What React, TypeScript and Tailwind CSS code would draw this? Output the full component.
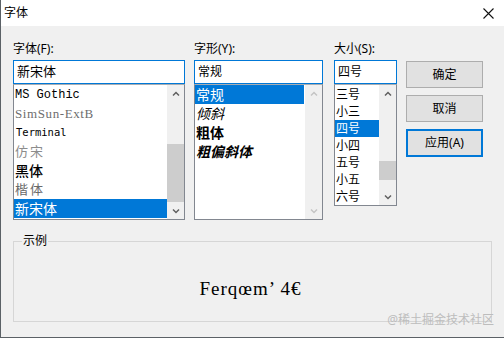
import React from "react";

const Chevron = ({ up, color }: { up?: boolean; color: string }) => (
    <svg width="8" height="6" viewBox="0 0 8 6">
        <polyline
            points={up ? "1,4.5 4,1.5 7,4.5" : "1,1.5 4,4.5 7,1.5"}
            fill="none"
            stroke={color}
            strokeWidth="1.5"
        />
    </svg>
);

const ScrollBar = ({ thumbTop, thumbH, disabled }: { thumbTop?: string; thumbH?: string; disabled?: boolean }) => {
    const c = disabled ? "#c4c4c4" : "#606060";
    return (
        <div className="w-[17px] flex flex-col bg-[#f0f0f0]">
            <div className="h-[17px] flex items-center justify-center">
                <Chevron up color={c} />
            </div>
            <div className="flex-1 flex flex-col">
                {!disabled && <div className={`bg-[#cdcdcd] ${thumbTop} ${thumbH}`} />}
            </div>
            <div className="h-[17px] flex items-center justify-center">
                <Chevron color={c} />
            </div>
        </div>
    );
};

const Label = ({ text }: { text: string }) => (
    <div className="h-[16px] leading-[16px] text-[12px] mb-[3px] text-black">{text}</div>
);

const Input = ({ text, size }: { text: string; size: string }) => (
    <div className={`h-[24px] border border-[#0078d7] bg-white pl-[3px] flex items-center ${size}`}>{text}</div>
);

const App = () => {
    return (
        <div className="relative flex flex-col w-[504px] h-[338px] overflow-hidden bg-[#f0f0f0] border-l border-b border-[#5b6166] font-['Noto_Sans','Noto_Sans_CJK_SC',sans-serif] text-black">
            {/* title bar */}
            <div className="h-[26px] bg-white flex items-center justify-between pl-[3px] pr-[10px]">
                <span className="text-[12px] leading-[16px]">字体</span>
                <svg width="11" height="11" viewBox="0 0 11 11">
                    <path d="M0.5 0.5 L10.5 10.5 M10.5 0.5 L0.5 10.5" stroke="#111" strokeWidth="1.1" />
                </svg>
            </div>

            <div className="flex pl-[12px] pt-[15px]">
                {/* font */}
                <div className="w-[172px] flex flex-col">
                    <Label text="字体(F):" />
                    <Input text="新宋体" size="text-[13px]" />
                    <div className="h-[136px] border border-[#828790] border-t-[#a8adb3] bg-white flex">
                        <div className="flex-1 flex flex-col text-[14px]">
                            <div className="h-[19px] pl-[1px] flex items-center font-['Liberation_Mono',monospace] text-[12px]">MS Gothic</div>
                            <div className="h-[19px] pl-[1px] flex items-center font-['Liberation_Serif',serif] text-[13px] tracking-[0.6px] text-[#6e6e6e]">SimSun-ExtB</div>
                            <div className="h-[19px] pl-[2px] flex items-center font-['DejaVu_Sans_Mono',monospace] text-[10.5px]">Terminal</div>
                            <div className="h-[19px] pl-[1px] flex items-center text-[13px] text-[#8c8c8c] tracking-[2px]">仿宋</div>
                            <div className="h-[19px] pl-[1px] flex items-center font-medium">黑体</div>
                            <div className="h-[19px] pl-[1px] flex items-center text-[13px] text-[#6a6a6a] tracking-[2px]">楷体</div>
                            <div className="h-[19px] pl-[1px] flex items-center bg-[#0078d7] text-white">新宋体</div>
                        </div>
                        <ScrollBar thumbTop="mt-[42px]" thumbH="h-[58px]" />
                    </div>
                </div>

                {/* style */}
                <div className="w-[129px] ml-[9px] flex flex-col">
                    <Label text="字形(Y):" />
                    <Input text="常规" size="text-[12px]" />
                    <div className="h-[136px] border border-[#828790] border-t-[#a8adb3] bg-white flex">
                        <div className="flex-1 flex flex-col text-[14px] pr-[1px]">
                            <div className="h-[19px] pl-[1px] flex items-center bg-[#0078d7] text-white">常规</div>
                            <div className="h-[19px] pl-[1px] flex items-center italic">倾斜</div>
                            <div className="h-[19px] pl-[1px] flex items-center font-bold">粗体</div>
                            <div className="h-[19px] pl-[1px] flex items-center font-bold italic">粗偏斜体</div>
                        </div>
                        <ScrollBar disabled />
                    </div>
                </div>

                {/* size */}
                <div className="w-[63px] ml-[11px] flex flex-col">
                    <Label text="大小(S):" />
                    <Input text="四号" size="text-[12px]" />
                    <div className="h-[122px] border border-[#828790] border-t-[#a8adb3] bg-white flex">
                        <div className="flex-1 flex flex-col text-[12px] pt-[1px]">
                            <div className="h-[17px] pl-[1px] flex items-center">三号</div>
                            <div className="h-[17px] pl-[1px] flex items-center">小三</div>
                            <div className="h-[17px] pl-[1px] flex items-center bg-[#0078d7] text-white">四号</div>
                            <div className="h-[17px] pl-[1px] flex items-center">小四</div>
                            <div className="h-[17px] pl-[1px] flex items-center">五号</div>
                            <div className="h-[17px] pl-[1px] flex items-center">小五</div>
                            <div className="h-[17px] pl-[1px] flex items-center">六号</div>
                        </div>
                        <ScrollBar thumbTop="mt-[59px]" thumbH="h-[19px]" />
                    </div>
                </div>

                {/* buttons */}
                <div className="w-[77px] ml-[9px] pt-[20px] flex flex-col gap-[7px] text-[12px]">
                    <div className="h-[27px] bg-[#e1e1e1] border border-[#adadad] flex items-center justify-center">确定</div>
                    <div className="h-[27px] bg-[#e1e1e1] border border-[#adadad] flex items-center justify-center">取消</div>
                    <div className="h-[28px] bg-[#e1e1e1] border-2 border-[#0078d7] flex items-center justify-center">应用(A)</div>
                </div>
            </div>

            {/* sample */}
            <div className="relative ml-[12px] mt-[21px] w-[479px] h-[81px] border border-[#d6d6d6] flex justify-center pt-[35px]">
                <span className="absolute left-[8px] top-[-9px] px-[1px] bg-[#f0f0f0] text-[12px] leading-[16px]">示例</span>
                <span className="leading-[24px] text-[19px] tracking-[1px] font-['Liberation_Serif',serif] mr-[4px]">Ferqœm’ 4€</span>
            </div>

            <span className="absolute right-[10px] bottom-[9px] text-[12px] leading-[16px] text-[#bdbdbd]">@稀土掘金技术社区</span>
        </div>
    );
};

export default App;
